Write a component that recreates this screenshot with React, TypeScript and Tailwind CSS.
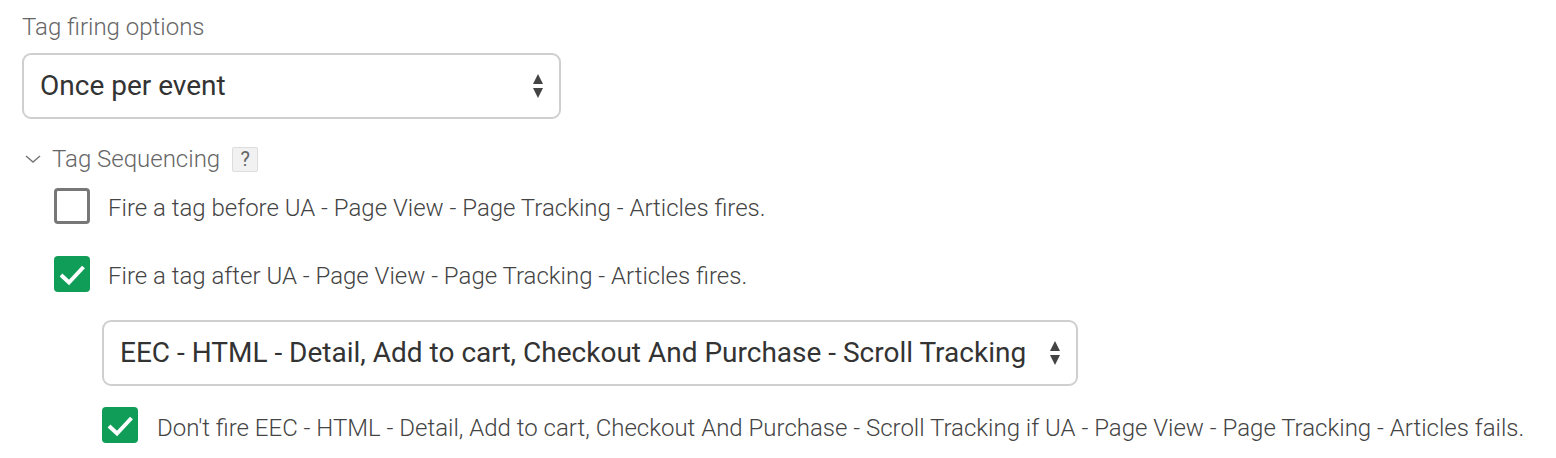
import React from "react";

function SortArrows() {
  return (
    <svg width="12" height="26" viewBox="0 0 12 26" className="shrink-0">
      <path d="M1 11 L6 1 L11 11 Z" fill="#444" />
      <path d="M1 15 L11 15 L6 25 Z" fill="#444" />
    </svg>
  );
}

function Checkbox({ checked }: { checked: boolean }) {
  if (!checked) {
    return <div className="h-[36px] w-[36px] shrink-0 rounded-[4px] border-[3px] border-[#777] bg-white" />;
  }
  return (
    <div className="flex h-[36px] w-[36px] shrink-0 items-center justify-center rounded-[4px] bg-[#0f9d58]">
      <svg width="36" height="36" viewBox="0 0 36 36">
        <polyline points="7,19 15,26.5 29.5,11" fill="none" stroke="#fff" strokeWidth="4" />
      </svg>
    </div>
  );
}

function Select({ value, width }: { value: string; width: string }) {
  return (
    <div
      className={`flex h-[66px] ${width} items-center justify-between rounded-[9px] border-2 border-[#cfcfcf] bg-white pl-[16px] pr-[15px]`}
    >
      <span className="text-[28px] text-[#333]">{value}</span>
      <SortArrows />
    </div>
  );
}

export default function App() {
  return (
    <div className="min-h-[458px] bg-white pl-[22px] pt-[13px] font-['Roboto',sans-serif]">
      <div className="h-[28px] text-[24px] font-light leading-[28px] text-[#666]">Tag firing options</div>

      <div className="mt-[12px]">
        <Select value="Once per event" width="w-[539px]" />
      </div>

      <div className="mt-[26px] flex h-[28px] items-center">
        <svg width="16" height="8" viewBox="0 0 16 8" className="ml-[3px]">
          <polyline points="1,1 8,7 15,1" fill="none" stroke="#777" strokeWidth="1.5" />
        </svg>
        <span className="ml-[11px] text-[24px] font-light leading-[28px] text-[#666]">Tag Sequencing</span>
        <span className="ml-[12px] flex h-[25px] w-[26px] items-center justify-center rounded-[2px] border border-[#ddd] bg-[#f1f1f1] text-[20px] text-[#666]">
          ?
        </span>
      </div>

      <div className="ml-[32px] mt-[15px] flex h-[36px] items-center gap-[18px]">
        <Checkbox checked={false} />
        <span className="pt-[4px] text-[24px] font-light text-[#444]">Fire a tag before UA - Page View - Page Tracking - Articles fires.</span>
      </div>

      <div className="ml-[32px] mt-[32px] flex h-[36px] items-center gap-[18px]">
        <Checkbox checked={true} />
        <span className="pt-[4px] text-[24px] font-light text-[#444]">Fire a tag after UA - Page View - Page Tracking - Articles fires.</span>
      </div>

      <div className="ml-[80px] mt-[28px]">
        <Select value="EEC - HTML - Detail, Add to cart, Checkout And Purchase - Scroll Tracking" width="w-[976px]" />
      </div>

      <div className="ml-[80px] mt-[21px] flex h-[36px] items-center gap-[19px]">
        <Checkbox checked={true} />
        <span className="pt-[5px] text-[24px] font-light text-[#444]">
          Don't fire EEC - HTML - Detail, Add to cart, Checkout And Purchase - Scroll Tracking if UA - Page View - Page Tracking - Articles fails.
        </span>
      </div>
    </div>
  );
}
